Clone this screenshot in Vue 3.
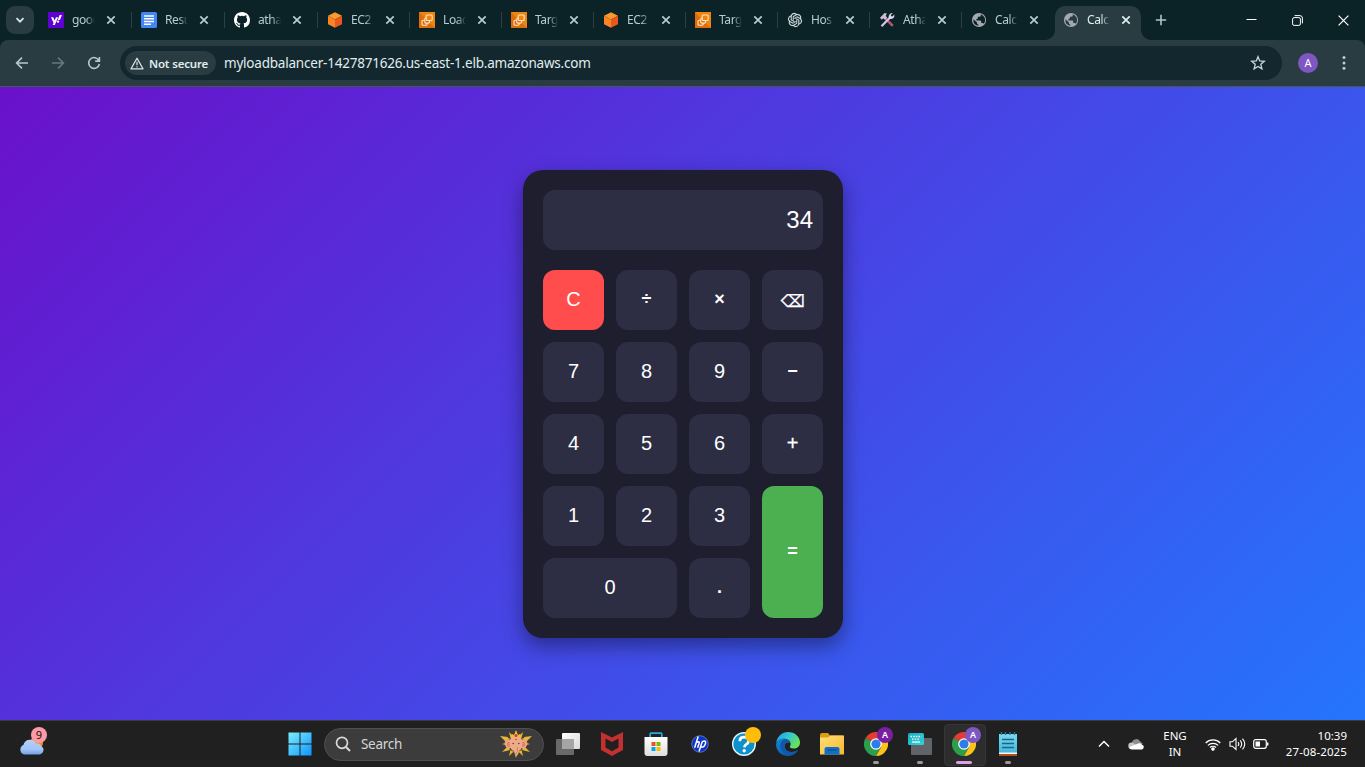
<script setup>
const tabs = [
  { icon: 'yahoo', title: 'goog' },
  { icon: 'docs', title: 'Resu' },
  { icon: 'github', title: 'atha' },
  { icon: 'ec2', title: 'EC2' },
  { icon: 'elb', title: 'Load' },
  { icon: 'elb', title: 'Targ' },
  { icon: 'ec2', title: 'EC2' },
  { icon: 'elb', title: 'Targ' },
  { icon: 'openai', title: 'Hos' },
  { icon: 'tools', title: 'Atha' },
  { icon: 'globe', title: 'Calc' },
  { icon: 'globe', title: 'Calc', active: true },
]
const keys = [
  { t: 'C', c: 'clear' }, { t: '÷', c: 'op' }, { t: '×', c: 'op' }, { t: '⌫', c: 'back' },
  { t: '7' }, { t: '8' }, { t: '9' }, { t: '−', c: 'op' },
  { t: '4' }, { t: '5' }, { t: '6' }, { t: '+', c: 'op plus' },
  { t: '1' }, { t: '2' }, { t: '3' }, { t: '=', c: 'op equals' },
  { t: '0', c: 'zero' }, { t: '.', c: 'point' },
]
const petals = [0, 60, 120, 180, 240, 300]
const rays = [0, 30, 60, 90, 120, 150, 180, 210, 240, 270, 300, 330]
</script>

<template>
  <div class="screen">
    <div class="tabstrip">
      <div class="tab-search">
        <svg width="10" height="10" viewBox="0 0 10 10"><path d="M1.5 3.2 5 6.7l3.5-3.5" fill="none" stroke="#d5e6e8" stroke-width="1.8" /></svg>
      </div>
      <div class="tabs">
        <div v-for="(tab, i) in tabs" :key="i" class="tab" :class="{ active: tab.active, bare: i >= 10, wide: i < 3 }">
          <svg class="favicon" width="16" height="16" viewBox="0 0 16 16">
            <g v-if="tab.icon === 'yahoo'">
              <rect width="16" height="16" fill="#5f01d1" />
              <path d="M3 5.2h2.2l1.4 3.3 1.4-3.3h2.1l-3.3 7.9H4.7l.9-2.1z" fill="#fff" />
              <path d="M11.6 3h2.3l-2 4.9H9.7z" fill="#fff" /><circle cx="10" cy="9.6" r="1.2" fill="#fff" />
            </g>
            <g v-else-if="tab.icon === 'docs'">
              <rect width="16" height="16" rx="1.6" fill="#4285f4" />
              <path d="M3 4h10M3 6.8h10M3 9.5h10M3 12.2h7" stroke="#fff" stroke-width="1.5" />
            </g>
            <path v-else-if="tab.icon === 'github'" fill="#fff" d="M8 0C3.58 0 0 3.58 0 8c0 3.54 2.29 6.53 5.47 7.59.4.07.55-.17.55-.38 0-.19-.01-.82-.01-1.49-2.01.37-2.53-.49-2.69-.94-.09-.23-.48-.94-.82-1.13-.28-.15-.68-.52-.01-.53.63-.01 1.08.58 1.23.82.72 1.21 1.87.87 2.33.66.07-.52.28-.87.51-1.07-1.78-.2-3.64-.89-3.64-3.95 0-.87.31-1.59.82-2.15-.08-.2-.36-1.02.08-2.12 0 0 .67-.21 2.2.82a7.5 7.5 0 0 1 4 0c1.53-1.04 2.2-.82 2.2-.82.44 1.1.16 1.92.08 2.12.51.56.82 1.27.82 2.15 0 3.07-1.87 3.75-3.65 3.95.29.25.54.73.54 1.48 0 1.07-.01 1.93-.01 2.2 0 .21.15.46.55.38A8.01 8.01 0 0 0 16 8c0-4.42-3.58-8-8-8z" />
            <g v-else-if="tab.icon === 'ec2'">
              <path d="M8 .2 15 3.8 8 7.4 1 3.8z" fill="#fa9a2c" />
              <path d="M1 3.8 8 7.4v8.4l-7-3.6z" fill="#fa8426" />
              <path d="M15 3.8 8 7.4v8.4l7-3.6z" fill="#e8571b" />
            </g>
            <g v-else-if="tab.icon === 'elb'">
              <rect width="16" height="16" fill="#df6c0b" />
              <path d="M16 0v16L0 0z" fill="#ee850e" />
              <g fill="none" stroke="#ffe6c8" stroke-width="1.1">
                <rect x="7.2" y="3" width="6" height="5.5" rx="1" />
                <path d="M10.5 8.5v1.6q0 1-1 1H6.800q-1 0-1-1V7q0-1 1-1h.4M5.800 8.300H4q-1 0-1 1v2.900q0 1 1 1h3.100q1 0 1-1v-1" />
              </g>
            </g>
            <path v-else-if="tab.icon === 'openai'" transform="translate(1 1) scale(.583)" fill="#dce8e8" stroke="#dce8e8" stroke-width=".3" d="M22.282 9.821a5.985 5.985 0 0 0-.516-4.910 6.046 6.046 0 0 0-6.510-2.900A6.065 6.065 0 0 0 4.981 4.182a5.985 5.985 0 0 0-3.998 2.900 6.046 6.046 0 0 0 .743 7.097 5.980 5.980 0 0 0 .510 4.911 6.051 6.051 0 0 0 6.515 2.900A5.985 5.985 0 0 0 13.260 24a6.056 6.056 0 0 0 5.772-4.206 5.990 5.990 0 0 0 3.998-2.900 6.056 6.056 0 0 0-.748-7.073zM13.260 22.430a4.476 4.476 0 0 1-2.876-1.041l.141-.080 4.779-2.758a.795.795 0 0 0 .393-.681v-6.737l2.020 1.169a.071.071 0 0 1 .038.052v5.583a4.504 4.504 0 0 1-4.495 4.493zM3.600 18.304a4.471 4.471 0 0 1-.535-3.014l.142.085 4.783 2.759a.771.771 0 0 0 .781 0l5.843-3.369v2.332a.080.080 0 0 1-.033.062L9.740 19.950a4.500 4.500 0 0 1-6.140-1.646zM2.341 7.896a4.485 4.485 0 0 1 2.366-1.973V11.600a.766.766 0 0 0 .388.677l5.815 3.354-2.020 1.169a.076.076 0 0 1-.071 0l-4.830-2.787A4.504 4.504 0 0 1 2.341 7.872zm16.596 3.856-5.833-3.388 2.014-1.164a.076.076 0 0 1 .071 0l4.830 2.791a4.494 4.494 0 0 1-.676 8.105v-5.678a.790.790 0 0 0-.407-.667zm2.011-3.023-.142-.085-4.774-2.782a.776.776 0 0 0-.785 0L9.409 9.230V6.897a.066.066 0 0 1 .028-.061l4.830-2.787a4.499 4.499 0 0 1 6.680 4.660zM8.307 12.863l-2.020-1.164a.080.080 0 0 1-.038-.057V6.075a4.499 4.499 0 0 1 7.376-3.454l-.142.081-4.778 2.758a.795.795 0 0 0-.393.681zm1.097-2.365 2.602-1.500 2.607 1.500v2.999l-2.597 1.500-2.607-1.500z" />
            <g v-else-if="tab.icon === 'tools'">
              <path d="m4.500 4.500 9.300 9.300" stroke="#b1596f" stroke-width="2.500" />
              <path d="M1 5.800 5.600 1l2.200.6L6.700 4l1.500 1.600-2.200 2.200-1.700-1.600L2.700 7.700z" fill="#cdbbdc" />
              <path d="M2.500 14.200 11 5.500" stroke="#d5c5e4" stroke-width="2.300" />
              <path d="M13.800 1 11.600 3.300l1.500 1.500 2.200-2.200a3.500 3.500 0 0 1-5 4A3.600 3.600 0 0 1 13.800 1z" fill="#e4d7ee" />
            </g>
            <g v-else>
              <circle cx="8" cy="8" r="7.100" fill="#a4a9b0" />
              <path d="M9.800 2.300V3.400q0 1.300-1.500 1.400H6.900v1.500q0 .8-1.500.8v1.300h3.800q1 0 1 1v1.500h1.200q1 0 1.400.9 1.500-1.800 1.300-4.200Q13.600 4 9.800 2.300zM2.300 7.300Q1.800 12.900 7.300 13.800v-1.300q-1.400-.2-1.400-1.500v-.8z" :fill="tab.active ? '#283c42' : '#0b2227'" />
            </g>
          </svg>
          <span class="title">{{ tab.title }}</span>
          <svg class="close" width="10" height="10" viewBox="0 0 10 10"><path d="m1.300 1.300 7.400 7.400M8.700 1.300 1.300 8.700" stroke="currentColor" stroke-width="1.700" /></svg>
          <template v-if="tab.active"><i class="flare left"></i><i class="flare right"></i></template>
        </div>
      </div>
      <svg class="newtab" width="12" height="12" viewBox="0 0 12 12"><path d="M6 .8v10.400M.8 6h10.400" stroke="#a9c7ca" stroke-width="1.600" /></svg>
      <div class="winctl">
        <svg width="11" height="11" viewBox="0 0 11 11"><path d="M.5 4.500h10" stroke="#fff" /></svg>
        <svg width="11" height="11" viewBox="0 0 11 11" fill="none" stroke="#fff"><rect x=".6" y="2.600" width="7.800" height="7.800" rx="1.500" /><path d="M2.600.6h5.300q2.500 0 2.500 2.500v5.300" /></svg>
        <svg width="11" height="11" viewBox="0 0 11 11"><path d="m.6.6 9.800 9.800M10.400.6.6 10.400" stroke="#fff" stroke-width="1.200" /></svg>
      </div>
    </div>

    <div class="toolbar-wrap">
      <div class="toolbar">
        <div class="nav">
          <svg width="16" height="16" viewBox="0 0 16 16" fill="none" stroke="#b4cbce" stroke-width="1.600"><path d="M14 8H2.800M8 2.600 2.600 8 8 13.400" /></svg>
          <svg width="16" height="16" viewBox="0 0 16 16" fill="none" stroke="#66797e" stroke-width="1.600"><path d="M2 8h11.200M8 2.600 13.400 8 8 13.400" /></svg>
          <svg width="16" height="16" viewBox="0 0 16 16" fill="none" stroke="#b4cbce" stroke-width="1.600"><path d="M13 5.700A5.400 5.400 0 1 0 13.400 9M13.400 1.900v4.200H9.200" /></svg>
        </div>
        <div class="omnibox">
          <div class="chip">
            <svg width="14" height="13" viewBox="0 0 14 13"><path d="M7 1.300 13 11.800H1z" fill="none" stroke="#d9e5e6" stroke-width="1.300" stroke-linejoin="round" /><path d="M7 4.800v3.400M7 9.200v1.400" stroke="#d9e5e6" stroke-width="1.200" /></svg>
            <span>Not secure</span>
          </div>
          <span class="url">myloadbalancer-1427871626.us-east-1.elb.amazonaws.com</span>
          <svg class="star" width="16" height="16" viewBox="0 0 16 16"><path d="m8 1.700 1.700 4.300 4.600.3-3.500 3 1.100 4.500L8 11.400l-3.900 2.400 1.100-4.500-3.500-3 4.600-.3z" fill="none" stroke="#c8d8da" stroke-width="1.300" /></svg>
        </div>
        <div class="avatar">A</div>
        <svg class="menu" width="4" height="16" viewBox="0 0 4 16" fill="#b9ced1"><circle cx="2" cy="2.500" r="1.500" /><circle cx="2" cy="8" r="1.500" /><circle cx="2" cy="13.300" r="1.500" /></svg>
      </div>
    </div>

    <main class="page">
      <div class="calculator">
        <div class="display">34</div>
        <div class="keys">
          <button v-for="k in keys" :key="k.t" :class="k.c"><span>{{ k.t }}</span></button>
        </div>
      </div>
    </main>

    <footer class="taskbar">
      <div class="weather">
        <svg width="30" height="30" viewBox="0 0 30 30">
          <defs><linearGradient id="cloud" x1="0" y1="0" x2="0" y2="1"><stop offset="0" stop-color="#b3d1fb" /><stop offset=".65" stop-color="#a3c5f6" /><stop offset="1" stop-color="#6f9fe8" /></linearGradient></defs>
          <circle cx="18.500" cy="17" r="6.500" fill="#fb8c1a" />
          <path d="M6 28.500a5 5 0 0 1-.6-9.400A6.800 6.800 0 0 1 18 17.300a6.200 6.200 0 0 1 5.500 3 4.500 4.500 0 0 1-2 8.200z" fill="url(#cloud)" />
        </svg>
        <span class="badge">9</span>
      </div>

      <div class="cell start">
        <svg width="24" height="24" viewBox="0 0 24 24">
          <defs><linearGradient id="win" gradientUnits="userSpaceOnUse" x1="0" y1="0" x2="24" y2="24"><stop offset="0" stop-color="#7ff0ff" /><stop offset="1" stop-color="#0a93fb" /></linearGradient></defs>
          <path d="M.5.500H11.500v11H.500zM12.500.500h11v11h-11zM.500 12.500h11v11H.500zM12.500 12.500h11v11h-11z" fill="url(#win)" />
        </svg>
      </div>
      <div class="search">
        <svg width="16" height="16" viewBox="0 0 16 16" fill="none" stroke="#dadada"><circle cx="7" cy="6.800" r="5.500" stroke-width="1.700" /><path d="m11 11 4 4" stroke-width="2" /></svg>
        <span>Search</span>
        <svg class="ganesha" width="32" height="28" viewBox="0 0 32 28">
          <path v-for="r in rays" :key="r" :transform="`rotate(${r} 16 14)`" d="m14.200 6 1.800-6 1.800 6z" fill="#e5b52f" />
          <path d="M8 7 0 6l6 6M24 7l8-1-6 6M7 17l-5 5 8-2M25 17l5 5-8-2" fill="#e9b933" />
          <path d="M10 10C6 8 4 11 5 15q2 5 6 3zM22 10c4-2 6 1 5 5q-2 5-6 3z" fill="#eda37f" />
          <path d="M10 12C8 11 6.500 12.500 7 15.500q1.500 2 3 1zM22 12c2-1 3.500.5 3 3.500q-1.500 2-3 1z" fill="#dc8468" />
          <path d="M9.500 12Q10 6 16 6t6.500 6q0 7-3.500 9-.5 5-4 5 1.500-2-1.500-5-4-2-4-9z" fill="#efab88" />
          <path d="m11 8 1-4 2 1 2-4.500L18 5l2-1 1 4q-5-2.500-10 0z" fill="#f3bd35" />
          <circle cx="16" cy="5.500" r="1.500" fill="#cc3c3b" /><circle cx="16" cy="9.500" r=".8" fill="#c03838" />
          <circle cx="13.200" cy="13.500" r=".7" fill="#3d2730" /><circle cx="18.800" cy="13.500" r=".7" fill="#3d2730" />
          <path d="m12.500 20 1.500 2M17.500 17q1 5-2.500 8" stroke="#c97558" fill="none" stroke-width=".8" />
        </svg>
      </div>

      <div class="cell first">
        <svg width="24" height="24" viewBox="0 0 24 24">
          <defs><linearGradient id="tv" x2="1" y2="1"><stop stop-color="#fff" /><stop offset="1" stop-color="#d8d8d8" /></linearGradient></defs>
          <rect x="6" y="1" width="18" height="16" rx="1" fill="url(#tv)" />
          <rect x="0" y="7" width="18" height="16" rx="1" fill="#696969" /><path d="M6 7h12v10H6z" fill="#a5a5a5" />
        </svg>
      </div>
      <div class="cell">
        <svg width="24" height="26" viewBox="0 0 24 26"><path d="m1 1 11 5.500L23 1v18l-11 6L1 19zM5.500 7.500v9l6.500 3.700 6.500-3.700v-9L12 11z" fill="#c3302f" fill-rule="evenodd" /></svg>
      </div>
      <div class="cell">
        <svg width="24" height="24" viewBox="0 0 24 24">
          <defs><linearGradient id="bag" x2="0" y2="1"><stop stop-color="#fff" /><stop offset="1" stop-color="#dedede" /></linearGradient></defs>
          <path d="M6.200 6V2.200q0-1 1-1h9.600q1 0 1 1V6" fill="none" stroke="#2aa9e0" stroke-width="1.800" />
          <path d="M.5 5h23v16q0 3-3 3h-17q-3 0-3-3z" fill="url(#bag)" />
          <path d="M7.500 10h4v4h-4z" fill="#f25022" /><path d="M12.500 10h4v4h-4z" fill="#7fba00" /><path d="M7.500 15h4v4h-4z" fill="#00a4ef" /><path d="M12.500 15h4v4h-4z" fill="#ffb900" />
        </svg>
      </div>
      <div class="cell">
        <svg width="18" height="18" viewBox="0 0 18 18"><circle cx="9" cy="9" r="8.300" fill="#0d35c9" stroke="#8c9dde" stroke-width=".6" /><path d="M7.200 1.500 3.600 12.800M5.200 7.700q3.600-2.300 2.900.5l-1.500 4.600M11.300 6.500 8 16.500M11.200 6.600q4.200-1.600 3.300 1.800-1.300 4.600-5 3.500" fill="none" stroke="#fff" stroke-width="1.500" /></svg>
      </div>
      <div class="cell">
        <svg width="24" height="24" viewBox="0 0 24 24"><circle cx="12" cy="12" r="11.300" fill="#0c91cc" stroke="#e8f7fd" stroke-width="1.400" /><path d="M7.800 9.200q0-4 4.400-4t4.300 3.700q0 2-2.300 3.500-1.700 1-1.800 3" fill="none" stroke="#fff" stroke-width="2.700" /><circle cx="12.200" cy="18.800" r="1.700" fill="#fff" /></svg>
        <i class="dot"></i>
      </div>
      <div class="cell">
        <svg width="24" height="24" viewBox="0 0 24 24">
          <defs><linearGradient id="edge1" x1="0" y1="0" x2="1" y2=".5"><stop stop-color="#1a9be2" /><stop offset=".5" stop-color="#31c6d5" /><stop offset="1" stop-color="#69e35b" /></linearGradient><linearGradient id="edge2" x2="1" y2="1"><stop stop-color="#1387da" /><stop offset="1" stop-color="#0b4d9f" /></linearGradient></defs>
          <path d="M.2 11C1 4.500 6 0 12 0c7 0 12 5 12 10.500 0 4-3 6-6.500 6-3 0-4.300-1-3.500-2.200 1.500-2.300.5-6-4-7.300C5.500 6 1.800 8 .2 11z" fill="url(#edge1)" />
          <path d="M.1 11.500C1.500 8 5 6.300 8.600 7c3 .6 4.800 2.200 5 4-1.700-1.400-4.700-.4-4.900 2.800-.2 3.500 3 6.400 7 6.200 2.800-.1 5-1.300 6.500-2.200C20 22 16 24 12 24 5 24-.5 18.500.1 11.500z" fill="url(#edge2)" />
          <path d="M8.600 7C4 9 3.500 14 5.500 18c2 3.700 5.500 5.700 9 5.600 3.300-.6 6-2.800 7.700-5.800-1.500.9-3.700 2.100-6.500 2.200-4 .2-7.200-2.700-7-6.200.2-3.200 3.200-4.200 4.900-2.800-.2-1.800-2-3.400-5-4z" fill="#1258aa" />
        </svg>
      </div>
      <div class="cell">
        <svg width="24" height="24" viewBox="0 0 24 24">
          <defs><linearGradient id="fold" x2="1" y2="1"><stop stop-color="#ffdf78" /><stop offset="1" stop-color="#f7b92d" /></linearGradient></defs>
          <path d="M0 3q0-2 2-2h6l2 2.500h12q2 0 2 2V8H0z" fill="#dc9d13" /><path d="M0 5.500h8L10.500 3.500H24V22.500H0z" fill="url(#fold)" />
          <path d="M4.500 22.500V17q0-2 2-2h11q2 0 2 2v5.500z" fill="#0f70cc" /><path d="M7.500 18h9" stroke="#0c59a5" stroke-width="2" />
        </svg>
      </div>
      <div v-for="n in 2" :key="n" class="cell" :class="n === 1 ? 'chrome1' : 'chrome2 current'">
        <svg width="24" height="24" viewBox="0 0 24 24">
          <path d="M12 12 1.600 6A12 12 0 0 1 22.400 6z" fill="#e53b30" /><path d="M12 12 1.600 6A12 12 0 0 0 12 24l5-9z" fill="#2c9f4c" /><path d="M22.400 6A12 12 0 0 1 12 24l5.200-9-1.200-9z" fill="#fcc419" />
          <circle cx="12" cy="12" r="5.800" fill="#fff" /><circle cx="12" cy="12" r="4.600" fill="#2e7bea" />
        </svg>
        <b class="profile">A</b><i class="running"></i>
      </div>
      <div class="cell kbd">
        <svg width="24" height="24" viewBox="0 0 24 24">
          <defs><linearGradient id="kb" x2="1" y2="1"><stop stop-color="#18abc5" /><stop offset="1" stop-color="#35d1d8" /></linearGradient></defs>
          <rect x="3" y="6" width="21" height="17" rx="1" fill="#606367" /><rect x="0" y="1" width="16" height="12" rx="1.500" fill="url(#kb)" />
          <path d="M2.500 4.500h11M4 7.200h8" stroke="#fff" stroke-width="1.300" stroke-dasharray="1.500 1.200" /><path d="M4 10h8" stroke="#fff" stroke-width="1.200" />
        </svg>
        <i class="running"></i>
      </div>
      <div class="cell note">
        <svg width="20" height="24" viewBox="0 0 20 24">
          <defs><linearGradient id="pad" x2="0" y2="1"><stop stop-color="#78d9ee" /><stop offset="1" stop-color="#49b6db" /></linearGradient></defs>
          <path d="M1 19h18v5H1z" fill="#a85420" /><path d="M1 17h18v5H1z" fill="#f5f5f5" /><path d="M1 2h18v18.500H1z" fill="url(#pad)" />
          <path d="M4 7.500h12M4 11.500h12M4 15.500h12" stroke="#14678a" stroke-width="1.500" /><path d="M3.500 0v3M7.500 0v3M12 0v3M16.500 0v3" stroke="#1a7fa0" stroke-width="1.400" />
        </svg>
        <i class="running"></i>
      </div>

      <div class="tray">
        <svg class="up" width="12" height="8" viewBox="0 0 12 8"><path d="M1 6.500 6 1.500l5 5" fill="none" stroke="#fff" stroke-width="1.500" /></svg>
        <svg class="onedrive" width="17" height="12" viewBox="0 0 17 12"><path d="M4 4a4.500 4.500 0 0 1 8-.8L15 6 3 9z" fill="#8d8d8d" /><path d="M3.500 11a3.200 3.200 0 1 1 0-6.400 4 4 0 0 1 2 .5L12.500 11z" fill="#c5c5c5" /><path d="M3.500 11.500Q1 11 1.300 9L10 5.500a4 4 0 0 1 4 1.200 2.500 2.500 0 0 1 0 4.800z" fill="#fff" /></svg>
        <div class="lang"><span>ENG</span><span>IN</span></div>
        <svg class="wifi" width="16" height="13" viewBox="0 0 16 13" fill="none" stroke="#fff" stroke-width="1.200"><path d="M.7 5a10.300 10.300 0 0 1 14.600 0M2.900 7.400a7.200 7.200 0 0 1 10.200 0M5 9.500a4.200 4.200 0 0 1 6 0" /><circle cx="8" cy="11" r="1.200" fill="#fff" /></svg>
        <svg class="sound" width="17" height="14" viewBox="0 0 17 14" fill="none" stroke="#fff" stroke-width="1.100"><path d="M1 4.800h2.400L7 1.500v11L3.400 9.200H1zM9 5q1.600 2 0 4M11.200 3.300q3 3.700 0 7.400M13.500 1.600q4.500 5.400 0 10.800" /></svg>
        <svg class="battery" width="16" height="10" viewBox="0 0 16 10"><rect x=".7" y=".7" width="12.600" height="8.600" rx="2" fill="none" stroke="#fff" stroke-width="1.200" /><rect x="2.500" y="2.500" width="4.500" height="5" fill="#fff" /><path d="M14.700 3.500v3" stroke="#fff" stroke-width="1.400" /></svg>
        <div class="clock"><span>10:39</span><span class="date">27-08-2025</span></div>
      </div>
    </footer>
  </div>
</template>

<style>
body { margin: 0; overflow: hidden; }
</style>

<style scoped>
* { box-sizing: border-box; }
svg { display: block; flex: none; }
.screen { width: 1365px; height: 767px; display: flex; flex-direction: column; font-family: "Noto Sans", "Open Sans", sans-serif; overflow: hidden; }
.tabstrip { height: 40px; flex: none; background: #0b2227; display: flex; align-items: center; padding-left: 6px; }
.tab-search { width: 28px; height: 28px; border-radius: 9px; background: #283c42; display: flex; align-items: center; justify-content: center; margin-right: 4px; flex: none; }
.tabs { display: flex; height: 40px; flex: none; }
.tab { width: 92px; display: flex; align-items: center; padding-left: 10px; position: relative; color: #b3cfd2; }
.wide { width: 93px; }
.tab:not(.bare)::after { content: ""; position: absolute; right: -1px; top: 12px; width: 1.500px; height: 16px; background: #2c4047; }
.title { width: 24px; margin-left: 8px; white-space: nowrap; font-size: 12px; line-height: 18px; letter-spacing: -.4px; -webkit-mask-image: linear-gradient(to right, #000 58%, transparent 96%); mask-image: linear-gradient(to right, #000 58%, transparent 96%); }
.close { margin-left: 10px; }
.active { color: #e2eff0; }
.active::before { content: ""; position: absolute; left: 2px; top: 6px; width: 86px; height: 34px; border-radius: 10px 10px 0 0; background: #283c42; }
.active > svg, .active > .title { position: relative; }
.flare { position: absolute; bottom: 0; width: 10px; height: 10px; }
.flare.left { left: -8px; background: radial-gradient(circle at 0 0, transparent 9.500px, #283c42 10.200px); }
.flare.right { left: 88px; background: radial-gradient(circle at 100% 0, transparent 9.500px, #283c42 10.200px); }
.newtab { margin-left: 10px; }
.winctl { margin-left: auto; display: flex; gap: 35px; padding-right: 16.500px; }
.toolbar-wrap { background: #0b2227; flex: none; }
.toolbar { height: 47px; background: #283c42; border-bottom: 1px solid #46565a; border-radius: 8px 8px 0 0; display: flex; align-items: center; padding-left: 14px; }
.nav { display: flex; gap: 20px; width: 106px; }
.omnibox { width: 1162px; height: 34px; border-radius: 17px; background: #12282e; display: flex; align-items: center; padding: 0 16px 0 5px; color: #e0edee; }
.chip { width: 91px; height: 24px; border-radius: 12px; background: #283c42; display: flex; align-items: center; padding-left: 5px; gap: 5px; font-size: 11.500px; font-weight: 600; letter-spacing: -.17px; white-space: nowrap; }
.url { margin-left: 8px; font-size: 13.500px; letter-spacing: -.21px; white-space: nowrap; }
.star { margin-left: auto; }
.avatar { width: 20px; height: 20px; border-radius: 50%; background: #7e57c2; color: #fff; font-size: 11px; line-height: 20px; text-align: center; margin-left: 16px; }
.menu { margin-left: 24px; }

.page { flex: 1; display: flex; align-items: center; justify-content: center; background: linear-gradient(135deg, #6a11cb, #2575fc); padding-top: 1px; }
.calculator { width: 320px; height: 468px; padding: 20px; border-radius: 20px; background: #1e1e2e; box-shadow: 0 8px 20px rgba(0, 0, 0, .4); font-family: "Liberation Sans", Arial, sans-serif; margin-left: 1px; }
.display { height: 60px; border-radius: 12px; background: #2d2d44; color: #fff; font-size: 24px; display: flex; align-items: center; justify-content: flex-end; padding-right: 10px; margin-bottom: 20px; }
.keys { display: grid; grid-template-columns: repeat(4, 61px); grid-auto-rows: 60px; gap: 12px; }
button { border: 0; padding: 0 0 2px; border-radius: 12px; background: #2d2d44; color: #fff; font: 20px "Liberation Sans", Arial, sans-serif; }
.op { font-weight: 700; font-size: 18px; }
.plus { font-size: 20px; font-weight: 400; -webkit-text-stroke: .3px #fff; }
.point { font-weight: 700; font-size: 18px; }
.back { font-family: "DejaVu Sans", sans-serif; font-size: 17px; padding: 2px 0 0; -webkit-text-stroke: .3px #fff; }
.clear { background: #ff4d4d; }
.equals { grid-row: span 2; background: #4caf50; }
.zero { grid-column: span 2; }

.taskbar { height: 47px; flex: none; background: #202020; border-top: 1px solid #3b3b3d; display: flex; align-items: center; color: #fff; }
.weather { width: 277px; height: 46px; padding: 5px 0 0 18px; position: relative; flex: none; }
.badge { position: absolute; left: 31px; top: 6px; width: 16px; height: 16px; border-radius: 50%; background: #ff99a4; color: #111; font-size: 11px; line-height: 16px; text-align: center; }
.cell { width: 44px; height: 46px; display: flex; align-items: center; justify-content: center; position: relative; flex: none; }
.start { padding-left: 1px; }
.first { margin-left: 2px; }
.search { width: 220px; height: 33px; margin-left: 3px; border-radius: 17px; background: #3c3c3c; border: 1px solid #505050; display: flex; align-items: center; padding: 0 11px 0 10px; gap: 10px; font-size: 13.500px; color: #d6d6d6; flex: none; letter-spacing: -.3px; }
.ganesha { margin-left: auto; }
.dot { position: absolute; right: 5px; top: 6px; width: 16px; height: 16px; border-radius: 50%; background: #ffbd0a; }
.profile { position: absolute; left: 23px; top: 6px; width: 16px; height: 16px; border-radius: 50%; background: #7b1fa2; font-size: 9px; line-height: 16px; text-align: center; font-weight: 600; }
.running { position: absolute; left: 19px; bottom: 3px; width: 6px; height: 3px; border-radius: 2px; background: #999; }
.chrome1 { order: 1; }
.kbd { order: 2; }
.chrome2 { order: 3; }
.note { order: 4; }
.current::before { content: ""; position: absolute; left: 2px; top: 3px; width: 40px; height: 40px; border-radius: 4px; background: #2d2d2d; border: 1px solid #363636; }
.current svg { position: relative; }
.current .profile { background: #7e57c2; }
.current .running { left: 14px; width: 16px; background: #dd9fe6; }
.tray { order: 5; margin-left: auto; display: flex; align-items: center; padding-right: 18px; font-size: 11.500px; line-height: 16px; }
.onedrive { margin-left: 18px; }
.lang { width: 30px; margin-left: 15px; display: flex; flex-direction: column; align-items: center; }
.wifi { margin-left: 15px; }
.sound { margin-left: 8px; }
.battery { margin-left: 7px; }
.clock { width: 78px; display: flex; flex-direction: column; align-items: flex-end; white-space: nowrap; }
.date { letter-spacing: .12px; }
</style>
